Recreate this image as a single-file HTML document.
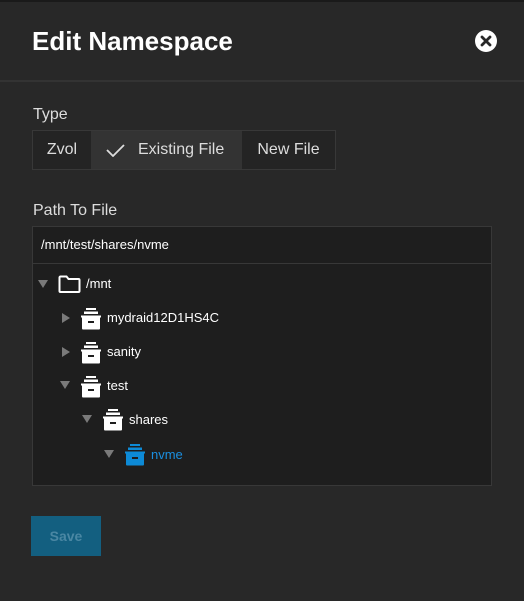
<!DOCTYPE html>
<html><head><style>
body{margin:0;width:524px;height:601px;background:#282828;font-family:"Liberation Sans",sans-serif;position:relative;overflow:hidden;color:#fff}
.a{position:absolute}
.t{font-size:13px;color:#fff}
.arr{position:absolute;width:0;height:0}
.down{border-left:5px solid transparent;border-right:5px solid transparent;border-top:8px solid #7a7a7a}
.right{border-top:5px solid transparent;border-bottom:5px solid transparent;border-left:8px solid #7a7a7a}
</style></head><body>
<div class="a" style="left:0;top:0;width:524px;height:2px;background:#1a1a1a"></div>
<div class="a" style="left:32px;top:26px;font-size:26px;font-weight:bold">Edit Namespace</div>
<svg class="a" style="left:475px;top:30px" width="22" height="22" viewBox="0 0 22 22"><circle cx="11" cy="11" r="11" fill="#fff"/><path d="M7 7L15 15M15 7L7 15" stroke="#282828" stroke-width="2.8" stroke-linecap="round"/></svg>
<div class="a" style="left:0;top:80px;width:524px;height:2px;background:#333"></div>
<div class="a" style="left:33px;top:106px;font-size:16px;color:#ddd">Type</div>
<div class="a" style="left:32px;top:130px;width:302px;height:38px;border:1px solid #383838;display:flex;font-size:16px;color:#ddd">
<div style="width:58px;background:#242424;display:flex;align-items:center;justify-content:center">Zvol</div>
<div style="width:151px;background:#333;display:flex;align-items:center;padding-left:14px;box-sizing:border-box"><svg width="20" height="14" viewBox="0 0 20 14"><path d="M2 7L8 13L19 2" stroke="#ddd" stroke-width="1.8" fill="none"/></svg><span style="margin-left:13px">Existing File</span></div>
<div style="flex:1;background:#242424;display:flex;align-items:center;justify-content:center">New File</div>
</div>
<div class="a" style="left:33px;top:202px;font-size:16px;color:#ddd">Path To File</div>
<div class="a" style="left:32px;top:226px;width:458px;height:258px;border:1px solid #383838;background:#1e1e1e"></div>
<div class="a" style="left:33px;top:263px;width:458px;height:1px;background:#383838"></div>
<div class="a t" style="left:41px;top:237px">/mnt/test/shares/nvme</div>

<div class="arr down" style="left:38px;top:280px"></div>
<svg class="a" style="left:58px;top:275px" width="23" height="18" viewBox="0 0 23 18"><path d="M1.5 2.5a1 1 0 0 1 1-1h6l2 2.5h10a1 1 0 0 1 1 1v11a1 1 0 0 1-1 1h-18a1 1 0 0 1-1-1z" fill="none" stroke="#fff" stroke-width="2"/></svg>
<div class="a t" style="left:86px;top:276px">/mnt</div>

<svg width="0" height="0" style="position:absolute"><defs><symbol id="ds" viewBox="0 0 20 22"><rect x="5" y="0" width="10" height="2" fill="currentColor"/><rect x="3" y="3.5" width="14" height="2.5" fill="currentColor"/><path d="M0 7.5h20v2h-1v11a1 1 0 0 1-1 1h-16a1 1 0 0 1-1-1v-11h-1z" fill="currentColor"/><rect x="7" y="13" width="6" height="2" fill="#1e1e1e"/></symbol></defs></svg>

<div class="arr right" style="left:62px;top:313px"></div>
<svg class="a" style="left:81px;top:308px;color:#fff" width="20" height="22"><use href="#ds"/></svg>
<div class="a t" style="left:107px;top:310px">mydraid12D1HS4C</div>

<div class="arr right" style="left:62px;top:347px"></div>
<svg class="a" style="left:81px;top:342px;color:#fff" width="20" height="22"><use href="#ds"/></svg>
<div class="a t" style="left:107px;top:344px">sanity</div>

<div class="arr down" style="left:60px;top:381px"></div>
<svg class="a" style="left:81px;top:376px;color:#fff" width="20" height="22"><use href="#ds"/></svg>
<div class="a t" style="left:107px;top:378px">test</div>

<div class="arr down" style="left:82px;top:415px"></div>
<svg class="a" style="left:103px;top:409px;color:#fff" width="20" height="22"><use href="#ds"/></svg>
<div class="a t" style="left:129px;top:412px">shares</div>

<div class="arr down" style="left:104px;top:450px"></div>
<svg class="a" style="left:125px;top:444px;color:#0d8ad6" width="20" height="22"><use href="#ds"/></svg>
<div class="a t" style="left:151px;top:447px;color:#1a8fe0">nvme</div>

<div class="a" style="left:31px;top:516px;width:70px;height:40px;background:#135f80;color:#4a87a3;font-weight:bold;font-size:14px;display:flex;align-items:center;justify-content:center">Save</div>
</body></html>
